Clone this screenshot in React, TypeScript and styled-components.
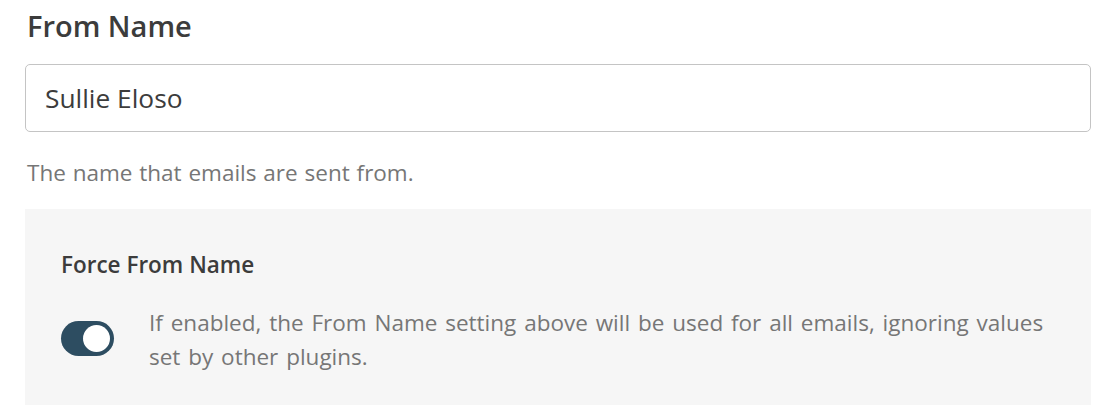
import React from "react";
import styled, { createGlobalStyle } from "styled-components";

const Global = createGlobalStyle`
  html, body { margin: 0; padding: 0; background: #ffffff; }
  body { font-family: "Open Sans", "Noto Sans", sans-serif; }
`;

const Page = styled.div`
  width: 1066px;
  padding-left: 25px;
  display: flex;
  flex-direction: column;
`;

const Heading = styled.h2`
  margin: 6px 0 0 2px;
  font-size: 29px;
  line-height: 40px;
  font-weight: 600;
  color: #3c3c3c;
`;

const Input = styled.input`
  margin-top: 18px;
  box-sizing: border-box;
  width: 1066px;
  height: 68px;
  border: 1.5px solid #c4c4c4;
  border-radius: 5px;
  padding: 0 19px;
  font-family: inherit;
  font-size: 26.3px;
  color: #3c3c3c;
  background: #fff;
  outline: none;
`;

const Help = styled.p`
  margin: 26px 0 0 2px;
  font-size: 22.5px;
  line-height: 30px;
  word-spacing: 1px;
  color: #767676;
`;

const Panel = styled.div`
  margin-top: 21px;
  background: #f6f6f6;
  padding: 41px 36px 40px 36px;
  display: flex;
  flex-direction: column;
  gap: 26px;
`;

const PanelTitle = styled.div`
  font-size: 22.5px;
  line-height: 30px;
  font-weight: 600;
  color: #3c3c3c;
`;

const Row = styled.div`
  display: flex;
  align-items: center;
  gap: 35px;
`;

const Toggle = styled.button<{ $on: boolean }>`
  flex: none;
  position: relative;
  width: 53px;
  height: 35px;
  margin-top: -3px;
  border-radius: 18px;
  border: none;
  padding: 0;
  background: ${(p) => (p.$on ? "#2d4d61" : "#bbb")};
  &::after {
    content: "";
    position: absolute;
    top: 4px;
    left: ${(p) => (p.$on ? "22px" : "4px")};
    width: 27px;
    height: 27px;
    border-radius: 50%;
    background: #fff;
  }
`;

const Desc = styled.div`
  font-size: 22.5px;
  line-height: 34px;
  word-spacing: 2px;
  color: #767676;
  max-width: 910px;
`;

export default function App() {
  return (
    <>
      <Global />
      <Page>
        <Heading>From Name</Heading>
        <Input defaultValue="Sullie Eloso" />
        <Help>The name that emails are sent from.</Help>
        <Panel>
          <PanelTitle>Force From Name</PanelTitle>
          <Row>
            <Toggle $on={true} aria-label="Force From Name" />
            <Desc>
              If enabled, the From Name setting above will be used for all emails, ignoring values set by other plugins.
            </Desc>
          </Row>
        </Panel>
      </Page>
    </>
  );
}
